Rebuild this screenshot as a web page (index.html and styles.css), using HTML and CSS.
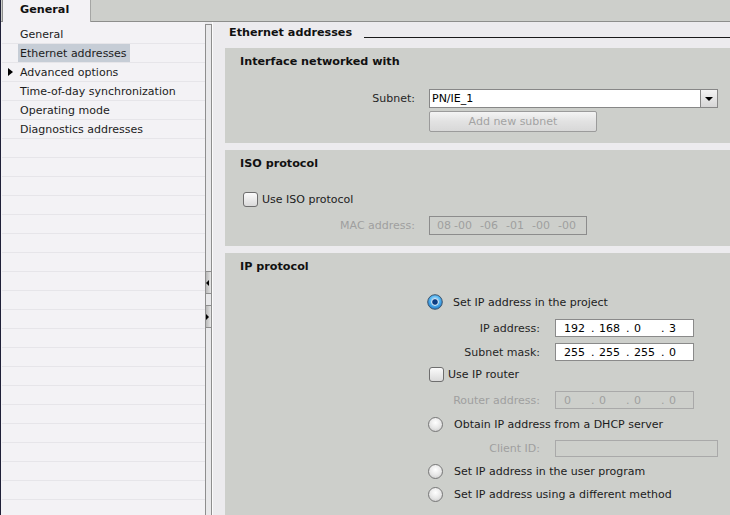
FILE: index.html
```html
<!DOCTYPE html>
<html>
<head>
<meta charset="utf-8">
<link rel="stylesheet" href="styles.css">
</head>
<body>
<div class="app">
  <div class="tabbar"><div class="tab">General</div></div>
  <div class="main">
    <div class="nav">
      <div class="nav-row"><span class="twisty"></span><span class="nav-label">General</span></div>
      <div class="nav-row"><span class="twisty"></span><span class="nav-label sel">Ethernet addresses</span></div>
      <div class="nav-row"><span class="twisty"><span class="caret"></span></span><span class="nav-label">Advanced options</span></div>
      <div class="nav-row"><span class="twisty"></span><span class="nav-label">Time-of-day synchronization</span></div>
      <div class="nav-row"><span class="twisty"></span><span class="nav-label">Operating mode</span></div>
      <div class="nav-row"><span class="twisty"></span><span class="nav-label">Diagnostics addresses</span></div>
      <div class="nav-row"></div><div class="nav-row"></div><div class="nav-row"></div><div class="nav-row"></div>
      <div class="nav-row"></div><div class="nav-row"></div><div class="nav-row"></div><div class="nav-row"></div>
      <div class="nav-row"></div><div class="nav-row"></div><div class="nav-row"></div><div class="nav-row"></div>
      <div class="nav-row"></div><div class="nav-row"></div><div class="nav-row"></div><div class="nav-row"></div>
      <div class="nav-row"></div><div class="nav-row"></div><div class="nav-row"></div><div class="nav-row"></div>
    </div>
    <div class="splitter">
      <div class="sbtn sbtn-first"><span class="tri-left"></span></div>
      <div class="sbtn sbtn-second"><span class="tri-right"></span></div>
    </div>
    <div class="content">
      <div class="heading"><span class="heading-text">Ethernet addresses</span><div class="rule"></div></div>

      <section class="panel">
        <div class="panel-title">Interface networked with</div>
        <div class="frow gap-20 h19">
          <span class="flabel">Subnet:</span>
          <div class="select">
            <span class="select-text">PN/IE_1</span>
            <span class="select-btn"><span class="tri-down"></span></span>
          </div>
        </div>
        <div class="frow gap-3">
          <span class="fspacer"></span>
          <div class="button">Add new subnet</div>
        </div>
      </section>

      <section class="panel">
        <div class="panel-title">ISO protocol</div>
        <div class="crow gap-20 iso-check">
          <span class="checkbox"></span><span>Use ISO protocol</span>
        </div>
        <div class="frow gap-9 h19">
          <span class="flabel dis">MAC address:</span>
          <div class="mac dis"><span class="mac-first">08</span><span class="mac-seg">-00</span><span class="mac-seg">-06</span><span class="mac-seg">-01</span><span class="mac-seg">-00</span><span class="mac-seg">-00</span></div>
        </div>
      </section>

      <section class="panel panel-last">
        <div class="panel-title">IP protocol</div>
        <div class="ip-form">
          <div class="crow gap-20">
            <svg class="radio-on" width="16" height="16" viewBox="0 0 16 16">
              <defs>
                <radialGradient id="rg" cx="50%" cy="40%" r="60%">
                  <stop offset="0" stop-color="#d9f2ff"/>
                  <stop offset="0.55" stop-color="#56b6f2"/>
                  <stop offset="1" stop-color="#1b73c4"/>
                </radialGradient>
              </defs>
              <circle cx="8" cy="8" r="7.3" fill="url(#rg)" stroke="#41576e" stroke-width="1"/>
              <circle cx="8" cy="8" r="3.4" fill="#0c3c82" stroke="#e8f6ff" stroke-width="1"/>
            </svg>
            <span>Set IP address in the project</span>
          </div>
          <div class="irow gap-9">
            <span class="ilabel">IP address:</span>
            <div class="ipbox"><span class="oct">192</span><span class="dot">.</span><span class="oct">168</span><span class="dot">.</span><span class="oct">0</span><span class="dot">.</span><span class="oct">3</span></div>
          </div>
          <div class="irow gap-6">
            <span class="ilabel">Subnet mask:</span>
            <div class="ipbox"><span class="oct">255</span><span class="dot">.</span><span class="oct">255</span><span class="dot">.</span><span class="oct">255</span><span class="dot">.</span><span class="oct">0</span></div>
          </div>
          <div class="crow gap-5 router-check">
            <span class="checkbox"></span><span>Use IP router</span>
          </div>
          <div class="irow gap-9">
            <span class="ilabel dis">Router address:</span>
            <div class="ipbox ipbox-dis dis"><span class="oct">0</span><span class="dot">.</span><span class="oct">0</span><span class="dot">.</span><span class="oct">0</span><span class="dot">.</span><span class="oct">0</span></div>
          </div>
          <div class="crow gap-7">
            <span class="radio"></span><span>Obtain IP address from a DHCP server</span>
          </div>
          <div class="irow irow-16 gap-8">
            <span class="ilabel dis">Client ID:</span>
            <div class="clientbox"></div>
          </div>
          <div class="crow gap-7">
            <span class="radio"></span><span>Set IP address in the user program</span>
          </div>
          <div class="crow gap-7">
            <span class="radio"></span><span>Set IP address using a different method</span>
          </div>
        </div>
      </section>
    </div>
  </div>
</div>
</body>
</html>
```
FILE: styles.css
```css
html, body {
  margin: 0;
  padding: 0;
  width: 730px;
  height: 515px;
  overflow: hidden;
  background: #ecebee;
}

body {
  font-family: "DejaVu Sans", Verdana, sans-serif;
  font-size: 11px;
  color: #1c1c1c;
}

.app {
  width: 730px;
  height: 515px;
  box-sizing: border-box;
  border-left: 1px solid #1f2038;
  display: flex;
  flex-direction: column;
  overflow: hidden;
}

.tabbar {
  height: 22px;
  box-sizing: border-box;
  background: #cdcfcb;
  border-bottom: 1px solid #8d8e8c;
  display: flex;
  align-items: flex-start;
  flex: none;
}

.tab {
  margin-left: 1px;
  width: 89px;
  height: 22px;
  box-sizing: border-box;
  background: #f3f2f5;
  border-left: 1px solid #8d8e8c;
  border-right: 1px solid #a5a6a4;
  padding-left: 17px;
  font-weight: bold;
  font-size: 11.2px;
  line-height: 20px;
  color: #111;
}

.main {
  flex: 1;
  display: flex;
  min-height: 0;
}

.nav {
  width: 204px;
  flex: none;
  background: #f3f2f5;
  padding-top: 3px;
  overflow: hidden;
}

.nav-row {
  margin: 0 0 0 1px;
  height: 19px;
  box-sizing: border-box;
  border-bottom: 1px solid #e6e5e9;
  display: flex;
  align-items: stretch;
}

.twisty {
  width: 16px;
  flex: none;
  display: flex;
  align-items: center;
}

.caret {
  margin-left: 6px;
  width: 0;
  height: 0;
  border-left: 5px solid #000;
  border-top: 4px solid transparent;
  border-bottom: 4px solid transparent;
}

.nav-label {
  padding: 0 3px 0 2px;
  line-height: 19px;
  white-space: nowrap;
}

.nav-label.sel {
  background: #c6cdd6;
  line-height: 18px;
  padding-top: 1px;
}

.splitter {
  width: 7px;
  flex: none;
  box-sizing: border-box;
  margin-top: 2px;
  border: 1px solid #8e8e8e;
  border-bottom: none;
  background: #e8e8ea;
  display: flex;
  flex-direction: column;
}

.sbtn {
  height: 23px;
  box-sizing: border-box;
  border-top: 1px solid #8e8e8e;
  border-bottom: 1px solid #8e8e8e;
  background: linear-gradient(to right, #b9b9b9, #e6e6e6);
  display: flex;
  align-items: center;
}

.sbtn-first { margin-top: 246px; }
.sbtn-second { margin-top: 11px; }

.tri-left {
  width: 0;
  height: 0;
  border-right: 3px solid #000;
  border-top: 3px solid transparent;
  border-bottom: 3px solid transparent;
}

.tri-right {
  width: 0;
  height: 0;
  border-left: 3px solid #000;
  border-top: 3px solid transparent;
  border-bottom: 3px solid transparent;
}

.content {
  flex: 1;
  min-width: 0;
  background: #ecebee;
  border-left: 1px solid #fbfbfb;
  padding: 3px 0 0 12px;
  overflow: hidden;
}

.heading {
  display: flex;
  align-items: flex-start;
  height: 15px;
  line-height: 15px;
  padding-left: 4px;
  margin-bottom: 8px;
}

.heading-text {
  font-weight: bold;
  font-size: 11.2px;
  color: #111;
  white-space: nowrap;
}

.rule {
  flex: 1;
  margin-left: 12px;
  height: 13px;
  box-sizing: border-box;
  border-bottom: 1px solid #1a1a1a;
}

.panel {
  background: #cdcfcb;
  padding: 5px 0 11px 0;
  margin-bottom: 7px;
}

.panel-last {
  padding-bottom: 40px;
}

.panel-title {
  padding-left: 15px;
  font-weight: bold;
  font-size: 11.2px;
  line-height: 17px;
  height: 16px;
  color: #111;
}

.gap-20 { margin-top: 20px; }
.gap-9 { margin-top: 9px; }
.gap-8 { margin-top: 8px; }
.gap-7 { margin-top: 7px; }
.gap-6 { margin-top: 6px; }
.gap-5 { margin-top: 5px; }
.gap-3 { margin-top: 3px; }

.frow {
  display: flex;
  align-items: center;
  gap: 14px;
}

.h19 { height: 19px; }

.flabel {
  width: 190px;
  text-align: right;
  flex: none;
  color: #262626;
}

.fspacer {
  width: 190px;
  flex: none;
}

.dis {
  color: #9f9f9f !important;
}

.select {
  width: 289px;
  height: 19px;
  box-sizing: border-box;
  border: 1px solid #878787;
  background: #fff;
  display: flex;
  align-items: stretch;
}

.select-text {
  flex: 1;
  padding-left: 2px;
  line-height: 17px;
  color: #000;
}

.select-btn {
  width: 16px;
  border-left: 1px solid #878787;
  background: linear-gradient(#f4f4f4, #d6d6d6);
  display: flex;
  align-items: center;
  justify-content: center;
}

.tri-down {
  width: 0;
  height: 0;
  border-top: 4px solid #000;
  border-left: 4px solid transparent;
  border-right: 4px solid transparent;
  margin-top: 1px;
}

.button {
  width: 168px;
  height: 21px;
  box-sizing: border-box;
  border: 1px solid #9b9b9b;
  border-radius: 2px;
  background: linear-gradient(#f4f4f4, #e2e2e2 50%, #d8d8d8);
  color: #a3a3a3;
  text-align: center;
  line-height: 19px;
}

.crow {
  display: flex;
  align-items: center;
  height: 16px;
  gap: 4px;
  color: #1c1c1c;
}

.iso-check {
  padding-left: 18px;
}

.checkbox {
  width: 15px;
  height: 15px;
  box-sizing: border-box;
  border: 1px solid #6e6e6e;
  border-radius: 3px;
  background: linear-gradient(#fbfbfb, #dadada);
  flex: none;
}

.mac {
  width: 158px;
  height: 19px;
  box-sizing: border-box;
  border: 1px solid #8c8c8c;
  padding-left: 7px;
  display: flex;
  align-items: center;
  white-space: nowrap;
}

.mac-first { width: 14px; flex: none; }
.mac-seg { width: 26px; flex: none; padding-left: 3px; box-sizing: border-box; }

.ip-form {
  margin-left: 202px;
}

.ip-form .crow {
  gap: 10px;
}

.router-check {
  padding-left: 2px;
  gap: 4px !important;
}

.radio {
  width: 15px;
  height: 15px;
  box-sizing: border-box;
  border: 1px solid #777;
  border-radius: 50%;
  background: radial-gradient(circle at 50% 35%, #ffffff, #e6e6e6 55%, #c4c4c4);
  flex: none;
  margin-left: 1px;
}

.ip-form .crow .radio {
  margin-right: 1px;
}

.radio-on {
  flex: none;
}

.irow {
  display: flex;
  align-items: center;
  gap: 15px;
  height: 18px;
}

.irow-16 { height: 16px; }

.ilabel {
  width: 113px;
  flex: none;
  text-align: right;
  color: #262626;
}

.ipbox {
  width: 139px;
  height: 18px;
  box-sizing: border-box;
  border: 1px solid #8a8a8a;
  background: #fff;
  padding-left: 8px;
  display: flex;
  align-items: center;
  color: #000;
}

.ipbox-dis {
  background: transparent;
  border-color: #a9a9a9;
}

.oct { width: 27px; flex: none; }
.dot { width: 8px; flex: none; }

.clientbox {
  width: 163px;
  height: 17px;
  box-sizing: border-box;
  border: 1px solid #a9a9a9;
}
```
